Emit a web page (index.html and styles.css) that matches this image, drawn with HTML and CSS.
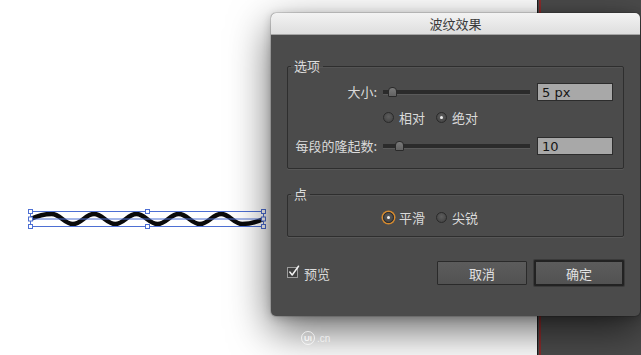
FILE: index.html
```html
<!DOCTYPE html>
<html lang="zh">
<head>
<meta charset="utf-8">
<title>波纹效果</title>
<link rel="stylesheet" href="styles.css">
</head>
<body>
<div class="screen">
  <div class="artboard">
    <svg class="canvas" width="537" height="355" viewBox="0 0 537 355">
      <path class="wave-line" d="M30.5 219 C36 216.5 43.2 214 51.68 214 C60.2 214 64.4 224 72.86 224 C81.4 224 85.6 214 94.05 214 C102.5 214 106.8 224 115.23 224 C123.7 224 127.9 214 136.41 214 C144.9 214 149.1 224 157.59 224 C166.1 224 170.3 214 178.77 214 C187.2 214 191.5 224 199.95 224 C208.4 224 212.7 214 221.14 214 C229.6 214 233.8 224 242.32 224 C250.8 224 258 221.5 263.5 219"/>
      <line class="sel-line" x1="30.5" y1="219" x2="263.5" y2="219"/>
      <rect class="sel-box" x="30.5" y="211.5" width="233" height="15"/>
      <rect class="handle" x="28.5" y="209.5" width="4" height="4"/>
      <rect class="handle" x="145.5" y="209.5" width="4" height="4"/>
      <rect class="handle" x="261.5" y="209.5" width="4" height="4"/>
      <rect class="handle" x="28.5" y="217" width="4" height="4"/>
      <rect class="handle" x="261.5" y="217" width="4" height="4"/>
      <rect class="handle" x="28.5" y="224.5" width="4" height="4"/>
      <rect class="handle" x="145.5" y="224.5" width="4" height="4"/>
      <rect class="handle" x="261.5" y="224.5" width="4" height="4"/>
    </svg>
    <div class="watermark"><span class="wm-logo">Ui</span><span class="wm-text">.cn</span></div>
  </div>
  <div class="side-panel"></div>

  <div class="dialog">
    <div class="titlebar">波纹效果</div>
    <div class="dialog-body">
      <fieldset class="group group-options">
        <legend>选项</legend>
        <div class="param-grid">
          <label class="param-label">大小:</label>
          <div class="slider"><span class="thumb" style="left:3.7%"></span></div>
          <input class="num-field" type="text" value="5 px">

          <span class="spacer"></span>
          <div class="radio-row shift-up">
            <span class="radio"><span class="radio-dot"></span>相对</span>
            <span class="radio checked"><span class="radio-dot"></span>绝对</span>
          </div>
          <span class="spacer"></span>

          <label class="param-label">每段的隆起数:</label>
          <div class="slider"><span class="thumb" style="left:8.5%"></span></div>
          <input class="num-field" type="text" value="10">
        </div>
      </fieldset>

      <fieldset class="group group-points">
        <legend>点</legend>
        <div class="param-grid single">
          <span class="spacer"></span>
          <div class="radio-row">
            <span class="radio checked focus"><span class="radio-dot"></span>平滑</span>
            <span class="radio"><span class="radio-dot"></span>尖锐</span>
          </div>
        </div>
      </fieldset>

      <div class="footer">
        <span class="check">
          <svg class="check-box" width="14" height="14" viewBox="0 0 14 14">
            <rect x="0.5" y="2.5" width="10" height="10" fill="#3f3f3f" stroke="#9c9c9c"/>
            <path d="M2.8 7 L5.2 10 L11.5 1.2" fill="none" stroke="#f2f2f2" stroke-width="1.5" stroke-linecap="round" stroke-linejoin="round"/>
          </svg>预览
        </span>
        <span class="footer-buttons">
          <button class="btn" type="button">取消</button>
          <button class="btn default" type="button">确定</button>
        </span>
      </div>
    </div>
  </div>
</div>
</body>
</html>
```

FILE: styles.css
```css
* { box-sizing: border-box; }

html, body {
  margin: 0;
  padding: 0;
}

body {
  width: 641px;
  height: 355px;
  overflow: hidden;
  background: #ffffff;
  font-family: "Noto Sans CJK SC", "Liberation Sans", sans-serif;
}

.screen {
  position: relative;
  display: flex;
  width: 641px;
  height: 355px;
  overflow: hidden;
}

.artboard {
  position: relative;
  flex: 0 0 537px;
  background: #ffffff;
}

.side-panel {
  flex: 1;
  background: linear-gradient(to right, #1c1c1c 0 1px, #4a4a4a 1px 2px, #8a2c2c 2px 4px, #4b4b4b 4px);
}

.canvas {
  position: absolute;
  left: 0;
  top: 0;
}

.wave-line {
  fill: none;
  stroke: #0a0a0a;
  stroke-width: 4.5;
  stroke-linecap: round;
}

.sel-line {
  stroke: #4d6fd3;
  stroke-width: 1;
}

.sel-box {
  fill: none;
  stroke: #4d6fd3;
  stroke-width: 1;
}

.handle {
  fill: #ffffff;
  stroke: #4d6fd3;
  stroke-width: 1;
}

.watermark {
  position: absolute;
  left: 301px;
  top: 331px;
  display: flex;
  align-items: center;
  gap: 2px;
  color: rgba(255, 255, 255, 0.7);
  font-family: "Liberation Sans", sans-serif;
  font-size: 10px;
  z-index: 2;
}

.wm-logo {
  display: flex;
  align-items: center;
  justify-content: center;
  width: 14px;
  height: 14px;
  border-radius: 50%;
  border: 1.5px solid rgba(255, 255, 255, 0.7);
  color: rgba(255, 255, 255, 0.8);
  font-weight: bold;
  font-size: 8px;
}

/* dialog window */
.dialog {
  position: absolute;
  left: 271px;
  top: 13px;
  width: 369px;
  height: 303px;
  border-radius: 5px;
  background: #4b4b4b;
  box-shadow: 0 14px 42px rgba(0, 0, 0, 0.6), 0 2px 10px rgba(0, 0, 0, 0.2), 0 0 0 1px rgba(0, 0, 0, 0.12);
  display: flex;
  flex-direction: column;
  z-index: 1;
}

.titlebar {
  flex: 0 0 22px;
  border-radius: 5px 5px 0 0;
  background: linear-gradient(#f3f3f3, #dedede);
  border-bottom: 1px solid #a5a5a5;
  color: #3a3a3a;
  font-size: 13px;
  line-height: 21px;
  text-align: center;
}

.dialog-body {
  flex: 1;
  padding: 23px 16px 0;
  color: #dadada;
  font-size: 13px;
}

.group {
  margin: 0;
  padding: 0 0 13px 0;
  min-width: 0;
  border: 1px solid #2e2e2e;
  border-radius: 2px;
  box-shadow: 0 1px 0 rgba(255, 255, 255, 0.07), inset 0 1px 0 rgba(255, 255, 255, 0.05);
}

.group legend {
  margin-left: 3px;
  padding: 0 3px;
  line-height: 16px;
  font-size: 13px;
  color: #dcdcdc;
}

.group-points {
  margin-top: 17px;
  padding-bottom: 10px;
}

.param-grid {
  display: grid;
  grid-template-columns: 89px 147px 77px;
  grid-template-rows: 18px 18px 18px;
  column-gap: 6px;
  row-gap: 9px;
  margin-top: 9px;
  align-items: center;
}

.param-grid.single {
  grid-template-rows: 18px;
  margin-top: 6px;
}

.param-label {
  justify-self: end;
  line-height: 18px;
  white-space: nowrap;
  color: #dadada;
}

.slider {
  position: relative;
  height: 18px;
}

.slider::before {
  content: "";
  position: absolute;
  left: 0;
  right: 0;
  top: 7px;
  height: 4px;
  background: #2b2b2b;
  border-bottom: 1px solid #5a5a5a;
}

.thumb {
  position: absolute;
  top: 4px;
  width: 9px;
  height: 10px;
  background: linear-gradient(#7a7a7a, #626262);
  border: 1px solid #2a2a2a;
  border-radius: 4px 4px 1px 1px;
}

.num-field {
  margin: 0 0 0 1px;
  width: 76px;
  height: 18px;
  padding: 0 4px;
  border: 1px solid #2c2c2c;
  background: #a8a8a8;
  color: #151515;
  font-family: "DejaVu Sans", "Liberation Sans", sans-serif;
  font-size: 13px;
  outline: none;
}

.radio-row {
  display: flex;
  align-items: center;
  gap: 11px;
  height: 18px;
  white-space: nowrap;
}

.radio-row.shift-up {
  margin-top: -3px;
}

.radio {
  display: flex;
  align-items: center;
  gap: 5px;
  color: #dadada;
}

.radio-dot {
  width: 11px;
  height: 11px;
  border-radius: 50%;
  border: 1px solid #2a2a2a;
  background: radial-gradient(circle at 50% 40%, #5e5e5e, #3e3e3e);
  display: flex;
  align-items: center;
  justify-content: center;
}

.radio.checked .radio-dot::after {
  content: "";
  width: 3px;
  height: 3px;
  border-radius: 50%;
  background: #eeeeee;
}

.radio.focus .radio-dot {
  box-shadow: 0 0 0 1.5px #d68a2e;
}

.footer {
  display: flex;
  align-items: center;
  justify-content: space-between;
  margin-top: 23px;
  height: 26px;
}

.check {
  display: flex;
  align-items: center;
  gap: 3px;
  color: #dadada;
}

.check-box {
  margin-top: -3px;
}

.footer-buttons {
  display: flex;
  align-items: center;
  gap: 7px;
}

.btn {
  width: 90px;
  height: 24px;
  padding: 0;
  border: 1px solid #2a2a2a;
  border-radius: 1px;
  background: linear-gradient(#5c5c5c, #525252);
  color: #e2e2e2;
  font-family: "Noto Sans CJK SC", "Liberation Sans", sans-serif;
  font-size: 13px;
}

.btn.default {
  border: 2px solid #222222;
  box-shadow: 0 0 0 1px #3a3a3a;
  height: 26px;
}
```
